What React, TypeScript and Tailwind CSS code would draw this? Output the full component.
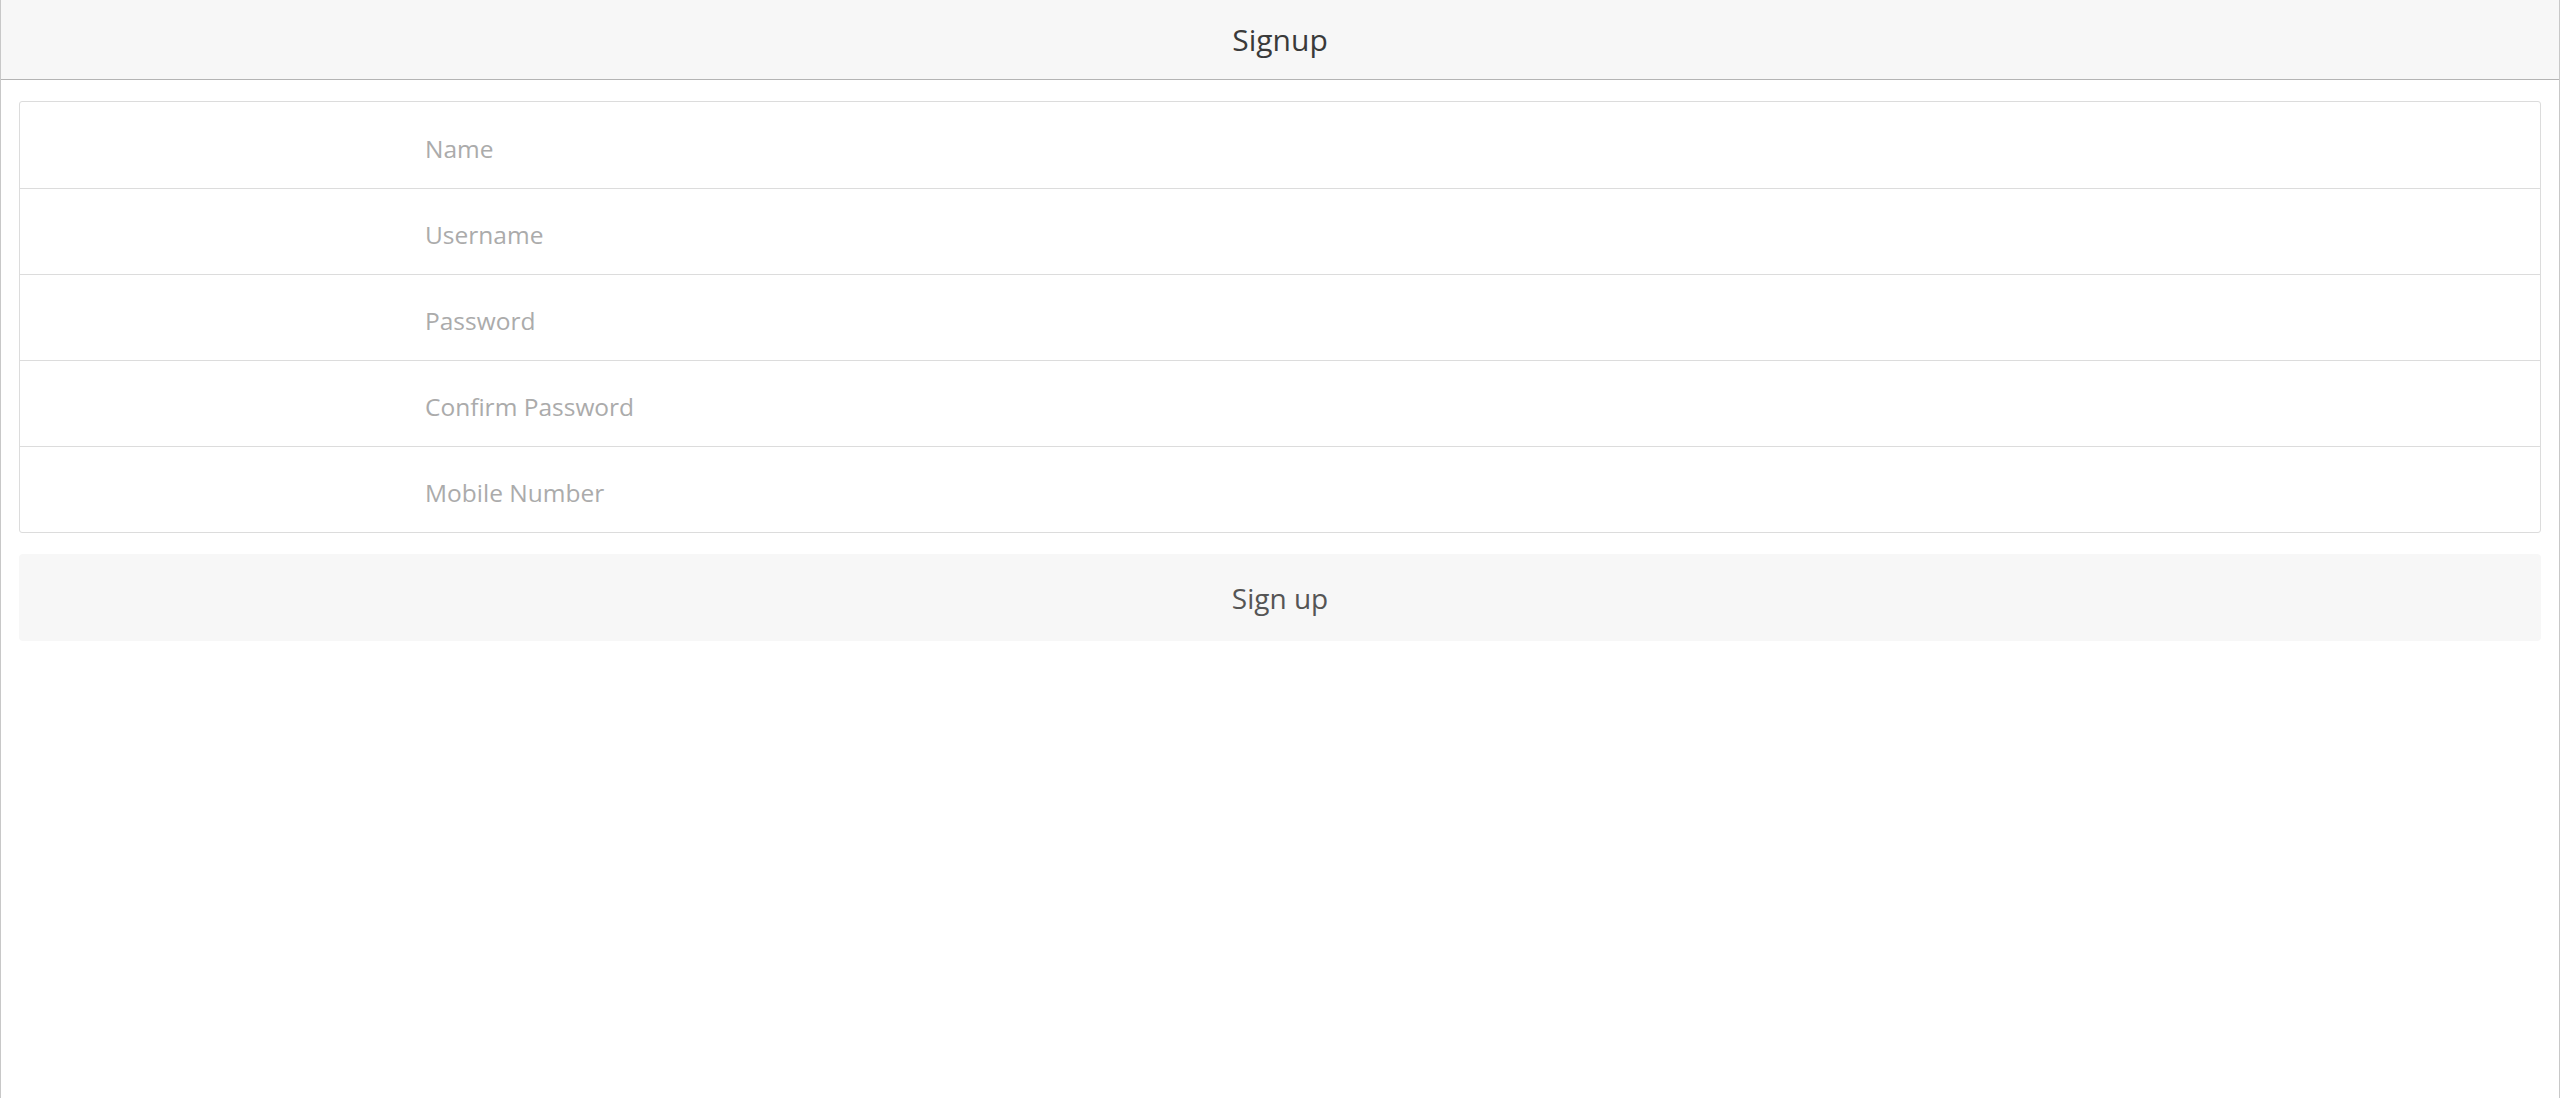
const fields = ["Name", "Username", "Password", "Confirm Password", "Mobile Number"];

export default function App() {
  return (
    <div className="min-h-[1098px] w-full border-x border-[#c8c8c8] bg-white font-['Open_Sans',sans-serif]">
      <header className="flex h-[80px] items-center justify-center border-b border-[#b4b4b4] bg-[#f7f7f7]">
        <h1 className="text-[30px] text-[#3a3a3a]">Signup</h1>
      </header>

      <div className="px-[18px] pt-[21px]">
        <div className="overflow-hidden rounded-[3px] border border-[#dcdcdc]">
          {fields.map((f, i) => (
            <div
              key={f}
              className={`flex h-[86px] items-center pl-[405px] ${i > 0 ? "border-t border-[#dcdcdc]" : ""}`}
            >
              <input
                type={f.includes("Password") ? "password" : "text"}
                placeholder={f}
                className="w-full bg-transparent pt-[8px] text-[24.5px] text-[#333] outline-none placeholder:text-[#ababab]"
              />
            </div>
          ))}
        </div>

        <button className="mt-[21px] flex h-[87px] w-full items-center justify-center rounded-[4px] bg-[#f7f7f7] text-[28px] text-[#555]">
          Sign up
        </button>
      </div>
    </div>
  );
}
